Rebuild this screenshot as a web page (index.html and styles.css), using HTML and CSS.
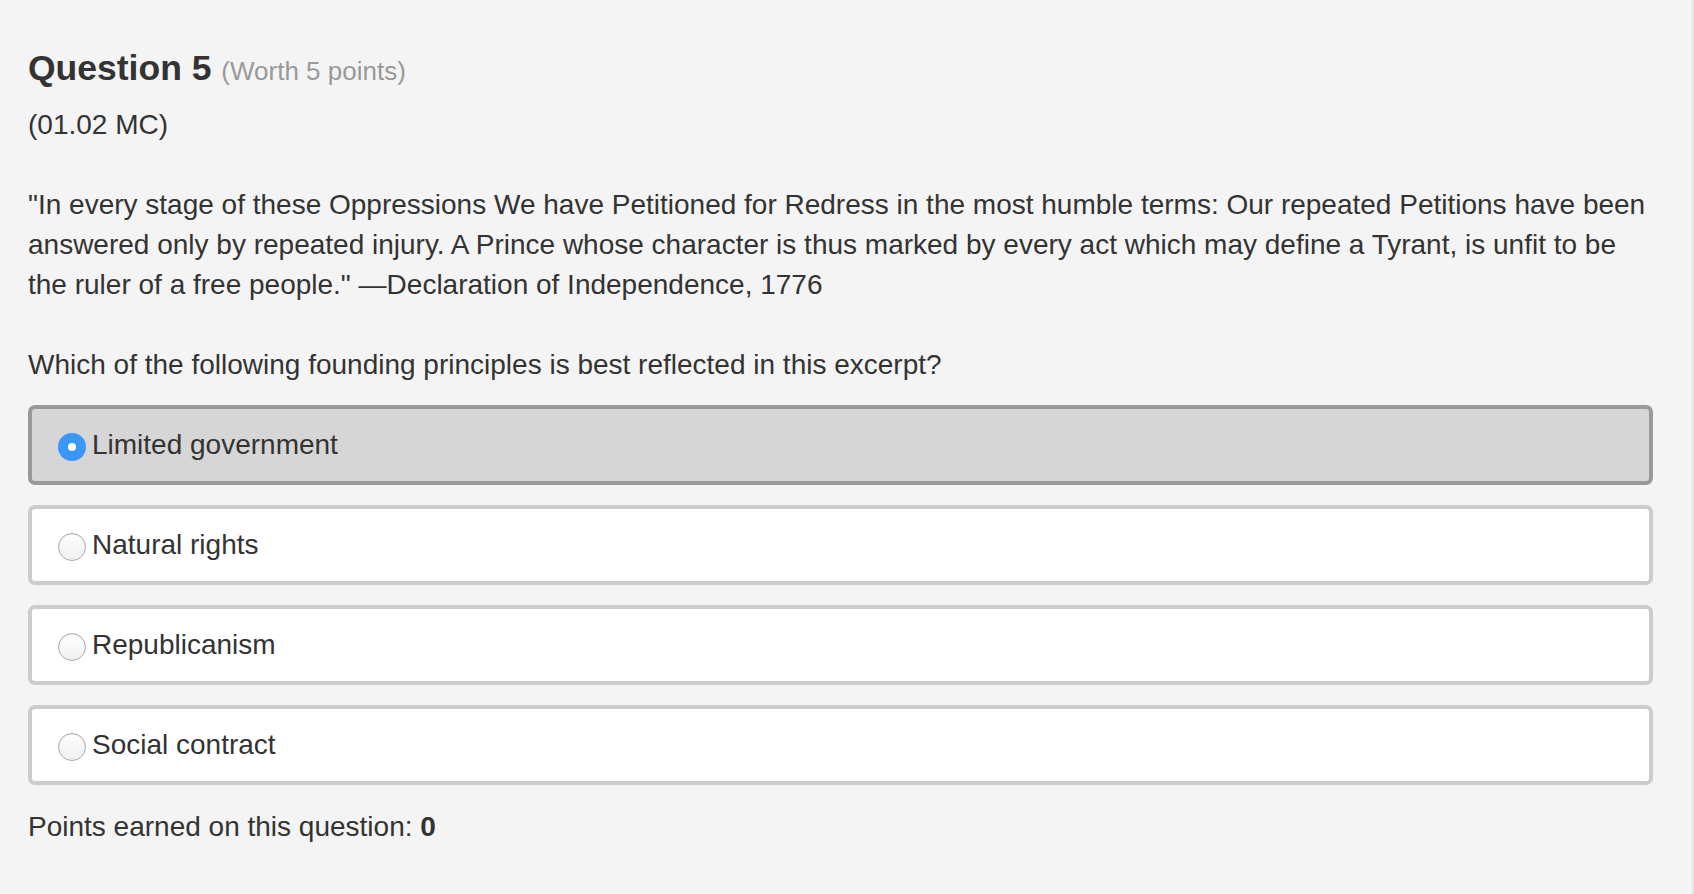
FILE: index.html
```html
<!DOCTYPE html>
<html lang="en">
<head>
<meta charset="utf-8">
<title>Question 5</title>
<link rel="stylesheet" href="styles.css">
</head>
<body>
<div class="page">
  <div class="question">
    <h2 class="q-title">Question 5 <span class="q-worth">(Worth 5 points)</span></h2>
    <p class="q-code">(01.02 MC)</p>
    <p class="q-quote">"In every stage of these Oppressions We have Petitioned for Redress in the most humble terms: Our repeated Petitions have been answered only by repeated injury. A Prince whose character is thus marked by every act which may define a Tyrant, is unfit to be the ruler of a free people." —Declaration of Independence, 1776</p>
    <p class="q-prompt">Which of the following founding principles is best reflected in this excerpt?</p>
    <ul class="answers">
      <li class="answer selected"><span class="radio checked"></span><span class="answer-text">Limited government</span></li>
      <li class="answer"><span class="radio"></span><span class="answer-text">Natural rights</span></li>
      <li class="answer"><span class="radio"></span><span class="answer-text">Republicanism</span></li>
      <li class="answer"><span class="radio"></span><span class="answer-text">Social contract</span></li>
    </ul>
    <p class="points">Points earned on this question: <strong>0</strong></p>
  </div>
</div>
</body>
</html>
```

FILE: styles.css
```css
html, body {
  margin: 0;
  padding: 0;
  background: #f4f4f4;
}

body {
  font-family: "Liberation Sans", Arial, Helvetica, sans-serif;
  color: #333333;
  font-size: 28px;
  line-height: 40px;
}

.page {
  min-height: 894px;
  box-sizing: border-box;
  padding: 48px 39px 0 28px;
  border-right: 2px solid #e4e4e4;
}

.question {
  display: flex;
  flex-direction: column;
}

.q-title {
  margin: 0;
  font-size: 35.5px;
  line-height: 40px;
  font-weight: bold;
  color: #333333;
}

.q-worth {
  font-size: 26px;
  font-weight: normal;
  color: #999999;
}

.q-code {
  margin: 14px 0 0 0;
}

.q-quote {
  margin: 40px 0 0 0;
}

.q-prompt {
  margin: 40px 0 0 0;
}

.answers {
  list-style: none;
  margin: 20px 0 0 0;
  padding: 0;
  display: flex;
  flex-direction: column;
  gap: 20px;
}

.answer {
  display: flex;
  align-items: center;
  height: 80px;
  box-sizing: border-box;
  padding: 0 0 0 26px;
  border: 4px solid #cccccc;
  border-radius: 7px;
  background: #ffffff;
}

.answer.selected {
  background: #d6d6d6;
  border-color: #999999;
}

.radio {
  flex: none;
  width: 28px;
  height: 28px;
  box-sizing: border-box;
  border-radius: 50%;
  border: 1px solid #aaaaaa;
  background: linear-gradient(#ffffff, #f0f0f0);
  box-shadow: inset 0 1px 1px rgba(0, 0, 0, 0.08);
  margin: 3px 6px 0 0;
  position: relative;
}

.radio.checked {
  border: none;
  background: #3b97f6;
  box-shadow: none;
}

.radio.checked::after {
  content: "";
  position: absolute;
  left: 50%;
  top: 50%;
  width: 8px;
  height: 8px;
  margin: -4px 0 0 -4px;
  border-radius: 50%;
  background: #ffffff;
}

.answer-text {
  line-height: 40px;
}

.points {
  margin: 21.5px 0 0 0;
}

.points strong {
  font-weight: bold;
}
```
